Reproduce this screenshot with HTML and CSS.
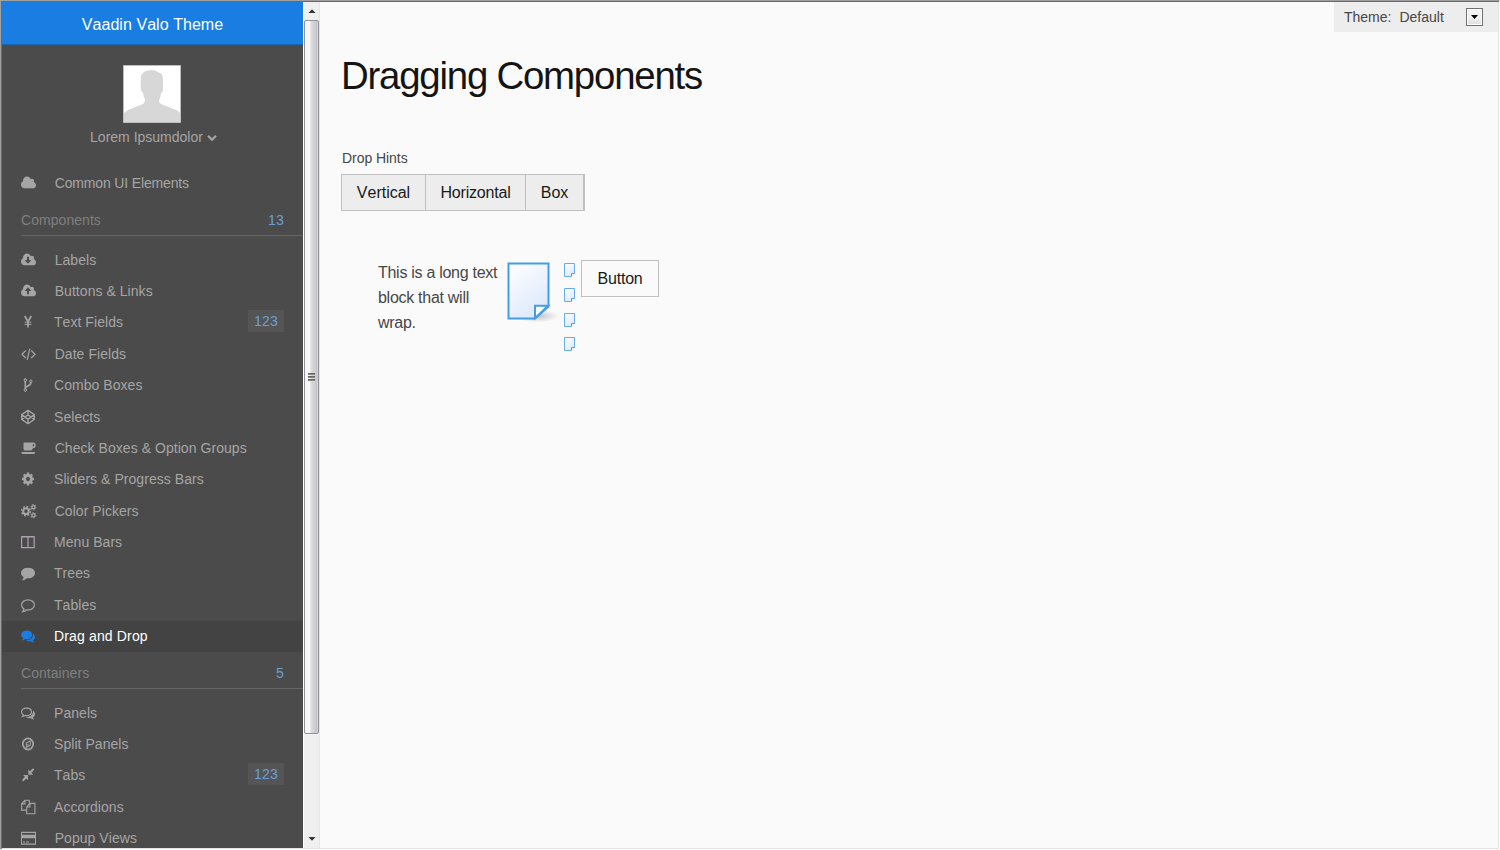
FILE: index.html
```html
<!DOCTYPE html>
<html lang="en">
<head>
<meta charset="utf-8">
<title>Vaadin Valo Theme</title>
<link rel="stylesheet" href="styles.css">
</head>
<body>
<svg width="0" height="0" class="defs">
  <defs>
    <linearGradient id="paper" x1="0" y1="0" x2=".6" y2="1"><stop offset="0" stop-color="#fff"/><stop offset="1" stop-color="#dde9fb"/></linearGradient>
    <radialGradient id="shade"><stop offset="0" stop-color="#000" stop-opacity=".22"/><stop offset="1" stop-color="#000" stop-opacity="0"/></radialGradient>
    <symbol id="mini" viewBox="0 0 13 16"><path d="M1.500 1.500h10v9.500l-3.500 3.500H1.500z" fill="url(#paper)" stroke="#66aeeb"/><path d="M11.500 11.500H8.500v3" fill="#fff" stroke="#4a9de6"/></symbol>
  </defs>
</svg>
<div class="app">
  <aside class="menu">
    <div class="brand">Vaadin Valo Theme</div>
    <div class="user">
      <svg class="avatar" viewBox="0 0 58 58"><path fill="#fff" stroke="#bdbdbd" d="M.5.5h57v57H.5z"/><path fill="#d7d7d7" d="M1 57V48.500Q2 46.500 5 45L19 39.500Q22 38 22 34.500Q20.500 32 20 28Q17.500 26 17.700 21Q17.500 15 18 11Q20 5 29 5Q33 5 35.500 7.500Q40 8 40 14V21Q41 26 38 28.500Q37.800 32 36 35Q36 38 39 39.500L53 45Q57 46.500 57 49V57z"/></svg>
      <div class="name"><span>Lorem Ipsumdolor</span><svg width="10" height="8" viewBox="0 0 10 8"><path d="M1 1.800l4 4 4-4" fill="none" stroke="currentColor" stroke-width="2.200"/></svg></div>
    </div>
    <nav>
      <a class="item wide common"><svg viewBox="64 0 2048 1792"><path d="M1984 1152q0 159-112.500 271.500t-271.500 112.500h-1088q-185 0-316.500-131.500t-131.500-316.500q0-132 71-241.500t187-163.500q-2-28-2-43 0-212 150-362t362-150q158 0 286.500 88t187.500 230q70-62 166-62 106 0 181 75t75 181q0 75-41 138 129 30 213 134.500t84 239.500z"/></svg><span>Common UI Elements</span></a>
      <h2>Components<b>13</b></h2>
      <a class="item wide"><svg viewBox="64 0 2048 1792"><path d="M1344 928q0-14-9-23t-23-9h-224v-352q0-13-9.500-22.500t-22.500-9.500h-192q-13 0-22.500 9.500t-9.500 22.500v352h-224q-13 0-22.500 9.500t-9.500 22.500q0 14 9 23l352 352q9 9 23 9t23-9l351-351q10-12 10-24zm640 224q0 159-112.500 271.500t-271.500 112.500h-1088q-185 0-316.500-131.500t-131.500-316.500q0-132 71-241.500t187-163.500q-2-28-2-43 0-212 150-362t362-150q158 0 286.500 88t187.500 230q70-62 166-62 106 0 181 75t75 181q0 75-41 138 129 30 213 134.500t84 239.500z"/></svg><span>Labels</span></a>
      <a class="item wide"><svg viewBox="64 0 2048 1792"><path d="M1344 864q0-14-9-23l-352-352q-9-9-23-9t-23 9l-351 351q-10 12-10 24 0 14 9 23t23 9h224v352q0 13 9.500 22.500t22.500 9.500h192q13 0 22.500-9.500t9.500-22.500v-352h224q13 0 22.500-9.500t9.500-22.500zm640 288q0 159-112.500 271.500t-271.500 112.500h-1088q-185 0-316.500-131.500t-131.500-316.500q0-132 71-241.500t187-163.500q-2-28-2-43 0-212 150-362t362-150q158 0 286.500 88t187.500 230q70-62 166-62 106 0 181 75t75 181q0 75-41 138 129 30 213 134.500t84 239.500z"/></svg><span>Buttons &amp; Links</span></a>
      <a class="item"><svg class="line" viewBox="0 0 16 14"><path stroke-width="1.700" d="M3.700 1.300L7 6.500l3.300-5.200M7 6v6.200"/><path d="M3.700 7.200h6.600M3.700 9.300h6.600"/></svg><span>Text Fields</span><b>123</b></a>
      <a class="item wide"><svg class="line" viewBox="0 0 16 14"><path stroke-width="1.200" d="M4.800 3.800L1 7.300l3.800 3.500M10.200 3.800L14 7.300l-3.800 3.500M8.800 2L6.200 12.500"/></svg><span>Date Fields</span></a>
      <a class="item"><svg class="line" viewBox="0 0 16 14"><circle cx="4.300" cy="2.500" r="1.200"/><circle cx="4.300" cy="11.700" r="1.200"/><circle cx="9.900" cy="3.500" r="1.200"/><path stroke-width="1.600" d="M4.300 3.500v7.200M4.500 9.500C5 7.500 9.900 8.500 9.900 4.700"/></svg><span>Combo Boxes</span></a>
      <a class="item"><svg class="line" viewBox="0 0 16 14"><path stroke-width="1.300" d="M7 .8l6.300 4v4.500L7 13.300l-6.300-4V4.800zM7 .8v4.100M7 9.200v4.100M.7 4.800L7 9.200l6.300-4.400M.7 9.300L7 4.900l6.300 4.400"/></svg><span>Selects</span></a>
      <a class="item wide"><svg viewBox="0 0 16 14"><path fill-rule="evenodd" d="M2.500 1.800h9.800c3.300 0 3.200 5.300 0 5.300h-.5c0 1.500-.8 2.300-2 2.300H4.500c-1.300 0-2-1-2-2zM11.800 3.200v2.500c1.800.2 1.800-2.700 0-2.500zM.3 10.700h13.900c-.2 1.300-1 1.900-2 1.900H2.300c-1 0-1.900-.8-2-1.900z"/></svg><span>Check Boxes &amp; Option Groups</span></a>
      <a class="item"><svg viewBox="0 0 2048 1792"><path d="M1152 896q0-106-75-181t-181-75-181 75-75 181 75 181 181 75 181-75 75-181zm512-109v222q0 12-8 23t-20 13l-185 28q-19 54-39 91 35 50 107 138 10 12 10 25t-9 23q-27 37-99 108t-94 71q-12 0-26-9l-138-108q-44 23-91 38-16 136-29 186-7 28-36 28h-222q-14 0-24.500-8.500t-11.500-21.500l-28-184q-49-16-90-37l-141 107q-10 9-25 9-14 0-25-11-126-114-165-168-7-10-7-23 0-12 8-23 15-21 51-66.500t54-70.500q-27-50-41-99l-183-27q-13-2-21-12.500t-8-23.500v-222q0-12 8-23t19-13l186-28q14-46 39-92-40-57-107-138-10-12-10-24 0-10 9-23 26-36 98.500-107.500t94.500-71.500q13 0 26 10l138 107q44-23 91-38 16-136 29-186 7-28 36-28h222q14 0 24.500 8.500t11.500 21.500l28 184q49 16 90 37l142-107q9-9 24-9 13 0 25 10 129 119 165 170 7 8 7 22 0 12-8 23-15 21-51 66.500t-54 70.500q26 50 41 98l183 28q13 2 21 12.500t8 23.500z"/></svg><span>Sliders &amp; Progress Bars</span></a>
      <a class="item wide"><svg class="line" viewBox="0 0 16 14"><circle cx="5" cy="7.200" r="2.700" stroke-width="1.900"/><circle cx="5" cy="7.200" r="4.300" stroke-width="1.500" stroke-dasharray="1.700 1.677"/><circle cx="12.400" cy="3.400" r="1.500" stroke-width="1.200"/><circle cx="12.400" cy="3.400" r="2.400" stroke-dasharray="1.300 1.213"/><circle cx="12.400" cy="11" r="1.500" stroke-width="1.200"/><circle cx="12.400" cy="11" r="2.400" stroke-dasharray="1.300 1.213"/></svg><span>Color Pickers</span></a>
      <a class="item lilac"><svg class="line" viewBox="0 0 16 14"><path stroke-width="1.200" d="M.6 2.300h12.600v10H.6zM7 2.300v10M.6 1.900h12.600"/></svg><span>Menu Bars</span></a>
      <a class="item"><svg viewBox="0 0 2048 1792"><path d="M1792 896q0 174-120 321.500t-326 233-450 85.500q-70 0-145-8-198 175-460 242-49 14-114 22-17 2-30.500-9t-17.500-29v-1q-3-4-.5-12t2-10 4.500-9.500l6-9 7-8.500 8-9q7-8 31-34.500t34.500-38 31-39.500 32.500-51 27-59 26-76q-157-89-247.500-220t-90.500-281q0-130 71-248.500t191-204.500 286-136.500 348-50.500q244 0 450 85.500t326 233 120 321.500z"/></svg><span>Trees</span></a>
      <a class="item"><svg class="line" viewBox="0 0 16 14"><path stroke-width="1.200" d="M7 2.300c3.600 0 6.400 2 6.400 4.600S10.600 11.500 7 11.500H5.700C4.500 12.600 3.200 13.200 1.500 13.400c.8-.9 1.300-1.600 1.500-2.800C1.500 9.700.6 8.500.6 6.900.6 4.300 3.400 2.300 7 2.300z"/></svg><span>Tables</span></a>
      <a class="item active"><svg viewBox="0 0 2048 1792"><path d="M1408 768q0 139-94 257t-256.500 186.500-353.500 68.500q-86 0-176-16-124 88-278 128-36 9-86 16h-3q-11 0-20.500-8t-11.500-21l0-14 60-70q60-60 94-155q-124-72-195-177t-71-224q0-139 94-257t256.500-186.500 353.500-68.500 353.500 68.500 256.500 186.500 94 257zm384 256q0 120-71 224.500t-195 176.500q34 80 94 142l40 50q0 35-35 42q-50-7-86-16-154-40-278-128-90 16-176 16-271 0-472-132 58 4 88 4 161 0 309-45t264-129q125-92 192-212t67-254q0-77-23-152 129 71 204 178t75 230z"/></svg><span>Drag and Drop</span></a>
      <h2 class="second">Containers<b>5</b></h2>
      <a class="item"><svg viewBox="0 0 2048 1792"><path d="M704 320C320 320 70 530 70 768c0 150 90 270 230 350-20 80-60 130-120 200 150-30 250-80 340-130 60 20 120 22 184 22 384 0 634-200 634-442S1088 320 704 320z" fill="none" stroke="currentColor" stroke-width="145"/><path d="M1792 1024q0 120-71 224.500t-195 176.500q34 80 94 142l40 50q0 35-35 42q-50-7-86-16-154-40-278-128-90 16-176 16-271 0-472-132 58 4 88 4 161 0 309-45t264-129q125-92 192-212t67-254q0-77-23-152 129 71 204 178t75 230z"/></svg><span>Panels</span></a>
      <a class="item"><svg class="line" viewBox="0 0 16 14"><circle cx="7" cy="7" r="5.200" stroke-width="1.700"/><path d="M9.300 4.200L5.300 6.200v3.900l4-2z"/><path d="M7 7v2" /></svg><span>Split Panels</span></a>
      <a class="item"><svg viewBox="0 0 16 14"><path d="M7 6.900v5L5.300 10.200 2.200 13 1 11.800l2.800-3.100L2.100 6.900zM7.300 6.700V1.800L9 3.500 12 .8 13.200 2l-2.800 3 1.800 1.700z"/></svg><span>Tabs</span><b>123</b></a>
      <a class="item"><svg class="line" viewBox="0 0 16 14"><path stroke-width="1.100" d="M5.500 9.900H.6V4L4 .6h4.300v3M4 .6V4H.6M5.700 13.400V7L9 3.600h4.900v9.800zM9 3.600V7H5.700"/></svg><span>Accordions</span></a>
      <a class="item wide"><svg viewBox="0 0 16 14"><path fill-rule="evenodd" d="M0 1.200h15v12H0zM1 2.300v1.600h13V2.300zM1 7.200v5h13v-5zM2 10.200h2v1H2zM5 10.200h3v1H5z"/></svg><span>Popup Views</span></a>
    </nav>
  </aside>
  <div class="scrollbar">
    <div class="arrow"><svg width="8" height="4" viewBox="0 0 8 4"><path d="M.5 4L4 .3 7.500 4z" fill="#333"/></svg></div>
    <div class="thumb"><i></i><i></i><i></i></div>
    <div class="arrow end"><svg width="8" height="4" viewBox="0 0 8 4"><path d="M.5 0L4 3.700 7.500 0z" fill="#333"/></svg></div>
  </div>
  <main>
    <div class="theme"><span>Theme:</span><span>Default</span><div class="drop"><svg width="7" height="4" viewBox="0 0 7 4"><path d="M0 0h7L3.500 4z"/></svg></div></div>
    <h1>Dragging Components</h1>
    <div class="caption">Drop Hints</div>
    <div class="group"><div class="vert">Vertical</div><div class="horz">Horizontal</div><div class="box">Box</div></div>
    <div class="drag">
      <p>This is a long text<br>block that will<br>wrap.</p>
      <svg class="doc" width="54" height="66" viewBox="0 0 54 66"><ellipse cx="32" cy="55" rx="21" ry="6.500" fill="url(#shade)"/><path d="M2.500 2.500h40v43L29 57.500H2.500z" fill="url(#paper)" stroke="#459ce7" stroke-width="2"/><path d="M42 44.700H29v12.500z" fill="#fff" stroke="#459ce7" stroke-width="2"/></svg>
      <div class="minis"><svg><use href="#mini"/></svg><svg><use href="#mini"/></svg><svg><use href="#mini"/></svg><svg><use href="#mini"/></svg></div>
      <div class="button">Button</div>
    </div>
  </main>
</div>
</body>
</html>
```
FILE: styles.css
```css
* { box-sizing: border-box; }
body { margin: 0; font-family: "Liberation Sans", Arial, sans-serif; font-kerning: none; background: #fafafa; }
.defs { position: absolute; }
.app {
  display: flex; width: 1500px; height: 850px; overflow: hidden;
  border-style: solid; border-width: 1px; border-color: #a0a0a0 #fff #fff #a0a0a0;
  box-shadow: inset 1px 1px #696969, inset -1px -1px #e3e3e3; padding: 1px;
}
.menu { width: 301px; height: 846px; flex: none; overflow: hidden; background: #4b4b4b; color: #a5a5a5; font-size: 14px; }
.brand { height: 43px; background: #197de1; border-bottom: 1px solid #1b65b0; color: #fff; font-size: 16px; line-height: 45px; text-align: center; letter-spacing: .05px; }
.user { height: 122px; padding: 20px 1px 0 0; display: flex; flex-direction: column; align-items: center; }
.avatar { width: 58px; height: 58px; display: block; }
.name { display: flex; align-items: center; gap: 4px; line-height: 29px; padding-left: 3px; }
.item { display: flex; align-items: center; height: 31.4px; padding: 0 19px; letter-spacing: .05px; }
.item svg { width: 16px; height: 14px; flex: none; margin-right: 17px; fill: currentColor; transform: scaleY(1.07); }
.item.wide svg { margin-right: 17.7px; }
.item.common { letter-spacing: -.15px; }
.item svg.line { fill: none; stroke: currentColor; }
.item b, h2 b { margin-left: auto; font-weight: normal; color: #6a9fd8; letter-spacing: .2px; }
.item b { margin-bottom: 2px; background: #555; height: 22px; line-height: 22px; padding: 0 6px; }
.active { background: #434343; color: #fff; letter-spacing: .15px; }
.active svg { color: #197de1; }
.lilac svg { color: #b09fb3; }
h2 { display: flex; margin: 4px 0 7.5px 19px; padding-right: 19px; height: 34px; line-height: 36px; font-size: 14px; font-weight: normal; color: #7f7f7f; border-bottom: 1px solid #666; letter-spacing: .05px; }
h2.second { margin-top: 3.5px; }
.scrollbar { width: 17px; height: 846px; flex: none; display: flex; flex-direction: column; background: #f0f0f0; border-left: 1px solid #fff; border-right: 1px solid #e6e6e6; }
.arrow { height: 18px; display: flex; align-items: center; justify-content: center; }
.arrow.end { margin-top: auto; }
.thumb { height: 714px; border: 1px solid #929296; border-radius: 2px; background: linear-gradient(90deg, #f7f7f7 0 35%, #dfdfe2 45%, #c6c6cb 90%, #dcdce0); box-shadow: inset 1px 0 #f4f4f4; display: flex; flex-direction: column; align-items: center; justify-content: center; gap: 1px; }
.thumb i { width: 7px; height: 2px; background: linear-gradient(#555, #999); }
main { position: relative; flex: 1; padding: 49px 0 0 21px; background: #fafafa; color: #474747; }
.theme { position: absolute; top: 0; right: 0; width: 164px; height: 30px; display: flex; align-items: center; padding: 0 15px 0 10px; font-size: 14px; background: #ededed; }
.theme span { margin-right: 8px; }
.drop { margin-left: auto; width: 17px; height: 18px; border: 1px solid #707070; background: linear-gradient(#f2f2f2 50%, #ddd); box-shadow: inset 0 0 0 1px #fff; display: flex; align-items: center; justify-content: center; }
h1 { margin: 0; font-size: 38.4px; line-height: 50px; font-weight: normal; letter-spacing: -1.22px; color: #141414; }
.caption { margin: 49px 0 0 1px; height: 24px; line-height: 16px; font-size: 14px; letter-spacing: -.05px; }
.group { display: flex; width: 244px; height: 37px; border: 1px solid #c0c0c0; border-right-width: 2px; background: #ededed; font-size: 16px; line-height: 36px; letter-spacing: -.1px; color: #191919; text-align: center; }
.vert { width: 84px; border-right: 1px solid #c0c0c0; letter-spacing: 0; }
.horz { width: 100px; border-right: 1px solid #c0c0c0; letter-spacing: -.2px; }
.box { flex: 1; }
.drag { display: flex; padding: 49px 0 0 37px; font-size: 16px; }
p { margin: 0; width: 128px; line-height: 25px; letter-spacing: -.28px; }
.doc { margin-top: 1px; }
.minis { margin: 2px 5px 0 3px; display: grid; gap: 8.8px; }
.minis svg { width: 13px; height: 16px; display: block; }
.button { width: 78px; height: 37px; border: 1px solid #c0c0c0; line-height: 35px; text-align: center; letter-spacing: -.2px; color: #191919; }
```
